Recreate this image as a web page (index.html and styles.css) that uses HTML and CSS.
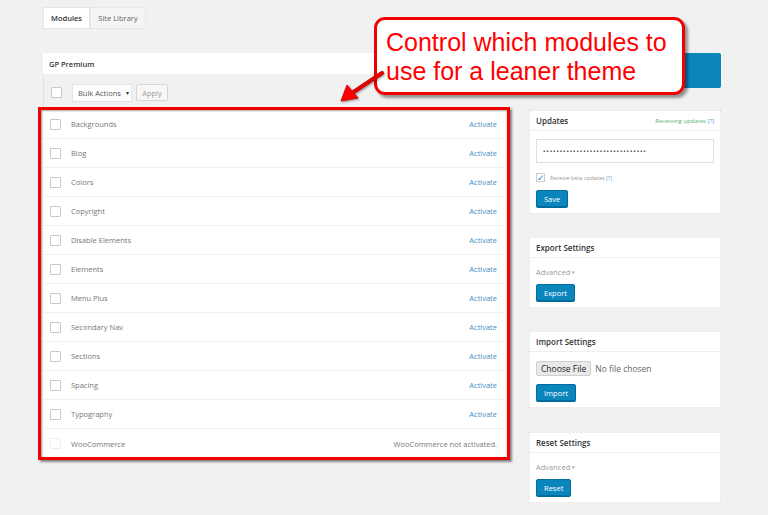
FILE: index.html
```html
<!DOCTYPE html>
<html>
<head>
<meta charset="utf-8">
<link rel="stylesheet" href="styles.css">
</head>
<body>
<div class="page">
  <div class="tabs">
    <div class="tab active">Modules</div>
    <div class="tab">Site Library</div>
  </div>
  <div class="main">
    <div class="left">
      <div class="panel-head">GP Premium</div>
      <div class="bulk">
        <span class="cb"></span>
        <div class="select">Bulk Actions <span class="caret">▾</span></div>
        <div class="apply">Apply</div>
      </div>
      <div class="list">
        <div class="row"><span class="cb"></span><span class="name">Backgrounds</span><a class="act">Activate</a></div>
        <div class="row"><span class="cb"></span><span class="name">Blog</span><a class="act">Activate</a></div>
        <div class="row"><span class="cb"></span><span class="name">Colors</span><a class="act">Activate</a></div>
        <div class="row"><span class="cb"></span><span class="name">Copyright</span><a class="act">Activate</a></div>
        <div class="row"><span class="cb"></span><span class="name">Disable Elements</span><a class="act">Activate</a></div>
        <div class="row"><span class="cb"></span><span class="name">Elements</span><a class="act">Activate</a></div>
        <div class="row"><span class="cb"></span><span class="name">Menu Plus</span><a class="act">Activate</a></div>
        <div class="row"><span class="cb"></span><span class="name">Secondary Nav</span><a class="act">Activate</a></div>
        <div class="row"><span class="cb"></span><span class="name">Sections</span><a class="act">Activate</a></div>
        <div class="row"><span class="cb"></span><span class="name">Spacing</span><a class="act">Activate</a></div>
        <div class="row"><span class="cb"></span><span class="name">Typography</span><a class="act">Activate</a></div>
        <div class="row last"><span class="cb faint"></span><span class="name">WooCommerce</span><span class="note">WooCommerce not activated.</span></div>
        <div class="highlight"></div>
      </div>
    </div>
    <div class="right">
      <div class="bluebar"></div>
      <div class="box updates">
        <div class="box-head"><span>Updates</span><span class="status">Receiving updates <span class="q">[?]</span></span></div>
        <div class="box-body">
          <div class="input">•••••••••••••••••••••••••••••••</div>
          <div class="beta"><span class="check">✓</span><span>Receive beta updates <span class="q">[?]</span></span></div>
          <div class="btn">Save</div>
        </div>
      </div>
      <div class="box export">
        <div class="box-head"><span>Export Settings</span></div>
        <div class="box-body">
          <div class="adv">Advanced <span class="chev">▾</span></div>
          <div class="btn">Export</div>
        </div>
      </div>
      <div class="box import">
        <div class="box-head"><span>Import Settings</span></div>
        <div class="box-body">
          <div class="file"><span class="choose">Choose File</span><span class="nofile">No file chosen</span></div>
          <div class="btn">Import</div>
        </div>
      </div>
      <div class="box reset">
        <div class="box-head"><span>Reset Settings</span></div>
        <div class="box-body">
          <div class="adv">Advanced <span class="chev">▾</span></div>
          <div class="btn">Reset</div>
        </div>
      </div>
    </div>
  </div>
  <div class="callout">Control which modules to<br>use for a leaner theme</div>
  <svg class="arrow" width="50" height="40" viewBox="0 0 50 40">
    <g fill="#ff0000" stroke="#e00000">
      <line x1="46" y1="6" x2="16" y2="26" stroke-width="4" stroke-linecap="round"/>
      <polygon points="5,34 11,18 22,31" stroke-width="1" stroke-linejoin="round"/>
    </g>
  </svg>
</div>
</body>
</html>
```

FILE: styles.css
```css
* { box-sizing: border-box; }
html, body { margin: 0; padding: 0; }
body {
  background: #f1f1f1;
  font-family: "Open Sans", "Liberation Sans", sans-serif;
  color: #555;
  width: 768px;
  height: 515px;
  overflow: hidden;
}
.page {
  position: relative;
  padding: 7px 0 0 43px;
}
.tabs { display: flex; height: 22px; }
.tab {
  display: flex;
  align-items: center;
  justify-content: center;
  font-size: 7.5px;
  color: #666;
  border: 1px dotted #dcdcdc;
  background: #f4f4f4;
  width: 56px;
  white-space: nowrap;
}
.tab.active {
  background: #fff;
  border: 1px solid #e5e5e5;
  color: #333;
  font-weight: 600;
  width: 47px;
}
.main {
  display: flex;
  margin-top: 24px;
  align-items: flex-start;
}
.left { width: 462px; }
.panel-head {
  height: 22px;
  background: #fff;
  display: flex;
  align-items: center;
  padding-left: 6px;
  font-size: 7.5px;
  font-weight: 600;
  color: #333;
  border-bottom: 1px solid #eee;
}
.bulk {
  height: 35px;
  display: flex;
  align-items: center;
  padding-left: 7px;
  border-left: 1px solid #e2e2e2;
}
.cb {
  width: 11px;
  height: 11px;
  border: 1px solid #c9c9c9;
  border-radius: 1px;
  background: #fff;
  flex: none;
}
.cb.faint { border-color: #eee; }
.select {
  margin-left: 10px;
  width: 60px;
  height: 18px;
  background: #fff;
  border: 1px solid #e3e3e3;
  display: flex;
  align-items: center;
  padding-left: 5px;
  font-size: 7.5px;
  color: #555;
}
.caret { font-size: 6px; margin-left: 5px; color: #333; }
.apply {
  margin-left: 4px;
  width: 32px;
  height: 17px;
  border: 1px solid #d5d5d5;
  background: #f7f7f7;
  border-radius: 2px;
  font-size: 7.5px;
  color: #999;
  display: flex;
  align-items: center;
  justify-content: center;
}
.list {
  position: relative;
  background: #fff;
}
.row {
  height: 29px;
  display: flex;
  align-items: center;
  padding: 0 8px 0 7px;
  border-bottom: 1px solid #f0f0f0;
  font-size: 7.5px;
}
.row .name { margin-left: 10px; color: #777; flex: 1; }
.row .act { color: #3f8fc4; }
.row .note { color: #777; }
.row.last { border-bottom: none; }
.highlight {
  position: absolute;
  top: -3px;
  left: -5px;
  right: -5px;
  bottom: -2px;
  border: 3px solid #f40000;
  box-shadow: 2px 2px 2px rgba(0,0,0,0.45), inset 1px 1px 2px rgba(0,0,0,0.35);
  pointer-events: none;
}
.right {
  margin-left: 24px;
  width: 192px;
  display: flex;
  flex-direction: column;
}
.bluebar {
  height: 35px;
  background: #0a86bd;
  border-radius: 2px;
}
.box {
  background: #fff;
  border: 1px dotted #dedede;
}
.box-head {
  height: 20px;
  display: flex;
  align-items: center;
  justify-content: space-between;
  padding: 0 6px;
  font-size: 8px;
  font-weight: 600;
  color: #333;
  border-bottom: 1px solid #efefef;
}
.status { font-size: 6px; font-weight: 400; color: #5cb46a; }
.q { color: #5c9fcc; }
.box-body {
  padding: 7px 6px 6px 6px;
  display: flex;
  flex-direction: column;
  align-items: flex-start;
}
.updates { margin-top: 22px; }
.export { margin-top: 23px; }
.import { margin-top: 23px; }
.reset { margin-top: 24px; }
.input {
  margin-top: 1px;
  width: 178px;
  height: 24px;
  border: 1px solid #e0e0e0;
  display: flex;
  align-items: center;
  padding-left: 6px;
  font-size: 6.5px;
  letter-spacing: 0.9px;
  color: #444;
}
.beta {
  margin-top: 10px;
  display: flex;
  align-items: center;
  font-size: 5.5px;
  color: #999;
}
.check {
  width: 9px;
  height: 9px;
  border: 1px solid #ccc;
  display: flex;
  align-items: center;
  justify-content: center;
  font-size: 9px;
  color: #1e8cbe;
  margin-right: 5px;
  line-height: 1;
}
.btn {
  margin-top: 8px;
  height: 17px;
  padding: 0 7px;
  background: #0a86bd;
  border: 1px solid #006fa0;
  border-radius: 2px;
  box-shadow: 0 1px 0 #006799;
  color: #fff;
  font-size: 7.5px;
  display: flex;
  align-items: center;
}
.adv {
  height: 13px;
  display: flex;
  align-items: center;
  font-size: 7.5px;
  color: #999;
}
.chev { font-size: 5px; margin-left: 2px; }
.adv + .btn { margin-top: 6px; }
.file {
  margin-top: 2px;
  display: flex;
  align-items: center;
  font-size: 8.5px;
}
.choose {
  height: 15px;
  padding: 0 4px;
  background: #e9e9e9;
  border: 1px solid #d0d0d0;
  border-radius: 2px;
  color: #222;
  display: flex;
  align-items: center;
}
.nofile { margin-left: 4px; color: #666; }
.file + .btn { margin-top: 8px; }
.callout {
  position: absolute;
  left: 374px;
  top: 17px;
  width: 311px;
  height: 78px;
  border: 3px solid #f00000;
  border-radius: 11px;
  background: #fff;
  box-shadow: 3px 3px 3px rgba(0,0,0,0.4);
  color: #ff0000;
  font-family: "Liberation Sans", Arial, sans-serif;
  font-size: 25px;
  line-height: 29px;
  padding: 8px 0 0 9px;
  white-space: nowrap;
}
.arrow {
  position: absolute;
  left: 336px;
  top: 67px;
  filter: drop-shadow(1px 1px 1px rgba(0,0,0,0.4));
}
```
